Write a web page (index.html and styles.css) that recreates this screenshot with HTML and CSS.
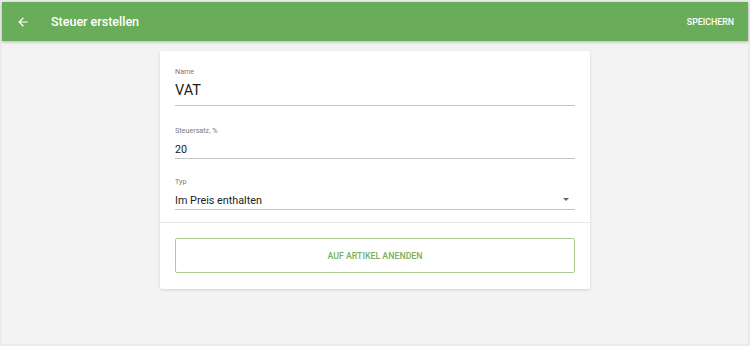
FILE: index.html
```html
<!DOCTYPE html>
<html lang="de">
<head>
    <meta charset="UTF-8">
    <meta name="viewport" content="width=device-width, initial-scale=1"/>
    <title>Steuer erstellen</title>
    <link rel="stylesheet" href="styles.css">
</head>
<body>

    <div class="app">
        <header class="bar">
            <svg class="back" viewBox="0 0 24 24" width="14" height="14">
                <path d="M20 11H7.83l5.59-5.59L12 4l-8 8 8 8 1.41-1.41L7.83 13H20v-2z" fill="#fff"/>
            </svg>
            <h1 class="title">Steuer erstellen</h1>
            <span class="save">SPEICHERN</span>
        </header>

        <main class="content">
            <div class="card">
                <div class="fields">
                    <div class="field field-name">
                        <label>Name</label>
                        <div class="value">VAT</div>
                    </div>
                    <div class="field field-rate">
                        <label>Steuersatz, %</label>
                        <div class="value">20</div>
                    </div>
                    <div class="field field-type">
                        <label>Typ</label>
                        <div class="value">Im Preis enthalten</div>
                        <span class="caret"></span>
                    </div>
                </div>
                <div class="actions">
                    <button class="outline">AUF ARTIKEL ANENDEN</button>
                </div>
            </div>
        </main>
    </div>

</body>
</html>
```

FILE: styles.css
```css
html,body,h1,div,label,button{
    margin: 0;
    padding: 0;
}

body{
    background-color: #ebebeb;
    font-family: Roboto, "Liberation Sans", sans-serif;
    padding: 2px;
    height: 346px;
    box-sizing: border-box;
}

.app{
    height: 342px;
    background-color: #f3f3f3;
    display: flex;
    flex-direction: column;
}

.bar{
    height: 39px;
    flex: none;
    display: flex;
    align-items: center;
    background-color: #69ad5b;
    color: #fff;
    box-shadow: 0 1px 3px rgba(0,0,0,0.25);
    position: relative;
    z-index: 1;
}

.back{
    margin-left: 14px;
    flex: none;
}

.title{
    margin-left: 21px;
    font-size: 12.5px;
    font-weight: 500;
    flex: 1;
}

.save{
    font-size: 8.8px;
    font-weight: 500;
    margin-right: 14px;
}

.content{
    display: flex;
    justify-content: center;
    padding-top: 10px;
}

.card{
    width: 430px;
    background-color: #fff;
    border-radius: 2px;
    box-shadow: 0 1px 3px rgba(0,0,0,0.14);
}

.fields{
    padding: 16px 15px 12px;
    border-bottom: 1px solid #e6e6e6;
}

.field{
    position: relative;
    border-bottom: 1px solid #c4c4c4;
}

.field label{
    display: block;
    font-size: 7.2px;
    line-height: 10px;
    color: #7a7a7a;
}

.value{
    color: #222;
    font-size: 10.8px;
    line-height: 14px;
}

.field-name .value{
    font-size: 14.5px;
    line-height: 20px;
    margin-top: 4px;
    padding-bottom: 4px;
}

.field-rate{
    margin-top: 20px;
}

.field-rate .value{
    margin-top: 7px;
    padding-bottom: 1px;
}

.field-type{
    margin-top: 18px;
}

.field-type .value{
    margin-top: 7px;
    padding-bottom: 1px;
}

.caret{
    position: absolute;
    right: 6px;
    top: 21px;
    width: 0;
    height: 0;
    border-left: 3.5px solid transparent;
    border-right: 3.5px solid transparent;
    border-top: 3.5px solid #666;
}

.actions{
    padding: 15px 15px 16px;
}

.outline{
    display: block;
    width: 100%;
    height: 35px;
    background: #fff;
    border: 1px solid #a9cd92;
    border-radius: 2px;
    color: #78b05c;
    font-family: Roboto, "Liberation Sans", sans-serif;
    font-size: 8.8px;
    font-weight: 500;
}
```
